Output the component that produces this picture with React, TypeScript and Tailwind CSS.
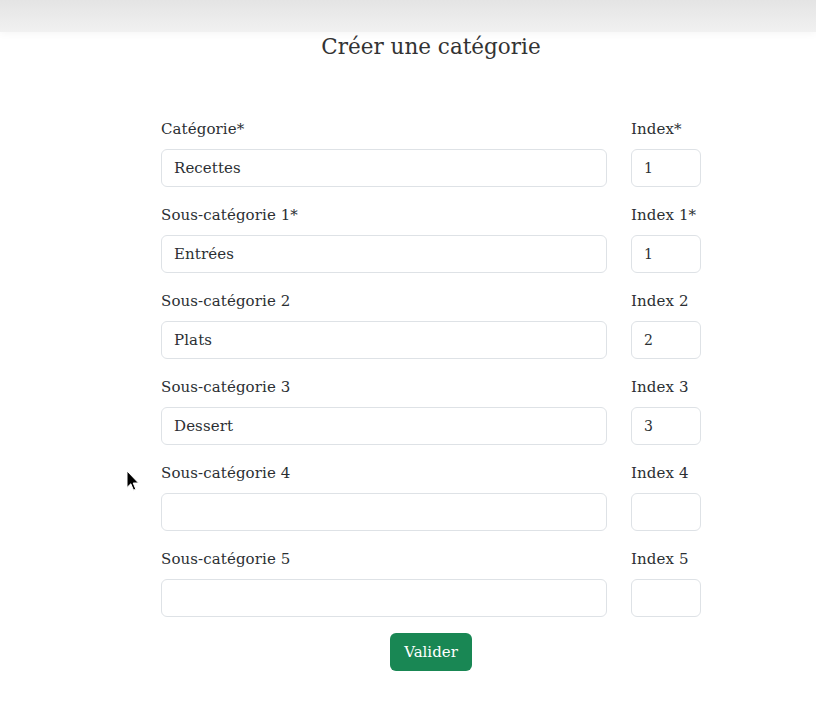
import React from 'react';

const rows = [
  { label: 'Catégorie*', index: 'Index*', value: 'Recettes', idx: '1' },
  { label: 'Sous-catégorie 1*', index: 'Index 1*', value: 'Entrées', idx: '1' },
  { label: 'Sous-catégorie 2', index: 'Index 2', value: 'Plats', idx: '2' },
  { label: 'Sous-catégorie 3', index: 'Index 3', value: 'Dessert', idx: '3' },
  { label: 'Sous-catégorie 4', index: 'Index 4', value: '', idx: '' },
  { label: 'Sous-catégorie 5', index: 'Index 5', value: '', idx: '' },
];

export default function App() {
  return (
    <div className="relative min-h-[713px] bg-white text-[#2b2f33] font-['DejaVu_Serif',serif]">
      <div className="h-8 bg-gradient-to-b from-[#e4e4e4] to-[#f1f1f1] shadow-[0_2px_8px_rgba(0,0,0,0.04)]" />

      <div className="ml-[161px] w-[540px]">
        <h1 className="mt-[1px] text-center text-[21.5px] leading-[28px] text-[#333]">Créer une catégorie</h1>

        <form className="mt-[56px] flex flex-col gap-4" onSubmit={(e) => e.preventDefault()}>
          {rows.map((r) => (
            <div key={r.label} className="flex gap-6">
              <div className="flex-1">
                <label className="block mb-2 text-[15px] leading-6 tracking-[0.1px]">{r.label}</label>
                <input
                  type="text"
                  defaultValue={r.value}
                  className="block h-[38px] w-full rounded-md border border-[#dee2e6] px-3 text-[15px] tracking-[0.1px] outline-none"
                />
              </div>
              <div className="w-[70px]">
                <label className="block mb-2 text-[15px] leading-6 tracking-[0.1px]">{r.index}</label>
                <input
                  type="text"
                  defaultValue={r.idx}
                  className="block h-[38px] w-full rounded-md border border-[#dee2e6] px-3 text-[14px] outline-none"
                />
              </div>
            </div>
          ))}
          <div className="flex justify-center">
            <button type="submit" className="h-[38px] px-[14px] rounded-md bg-[#198754] text-white text-[15px]">
              Valider
            </button>
          </div>
        </form>
      </div>

      <svg className="absolute left-[126px] top-[470px]" width="14" height="22" viewBox="0 0 14 22">
        <path d="M1 1 L1 17.5 L4.8 13.8 L7.5 20.2 L9.8 19.2 L7.2 13 L12.5 13 Z" fill="#000" stroke="#fff" strokeWidth="1" strokeLinejoin="round" />
      </svg>
    </div>
  );
}
